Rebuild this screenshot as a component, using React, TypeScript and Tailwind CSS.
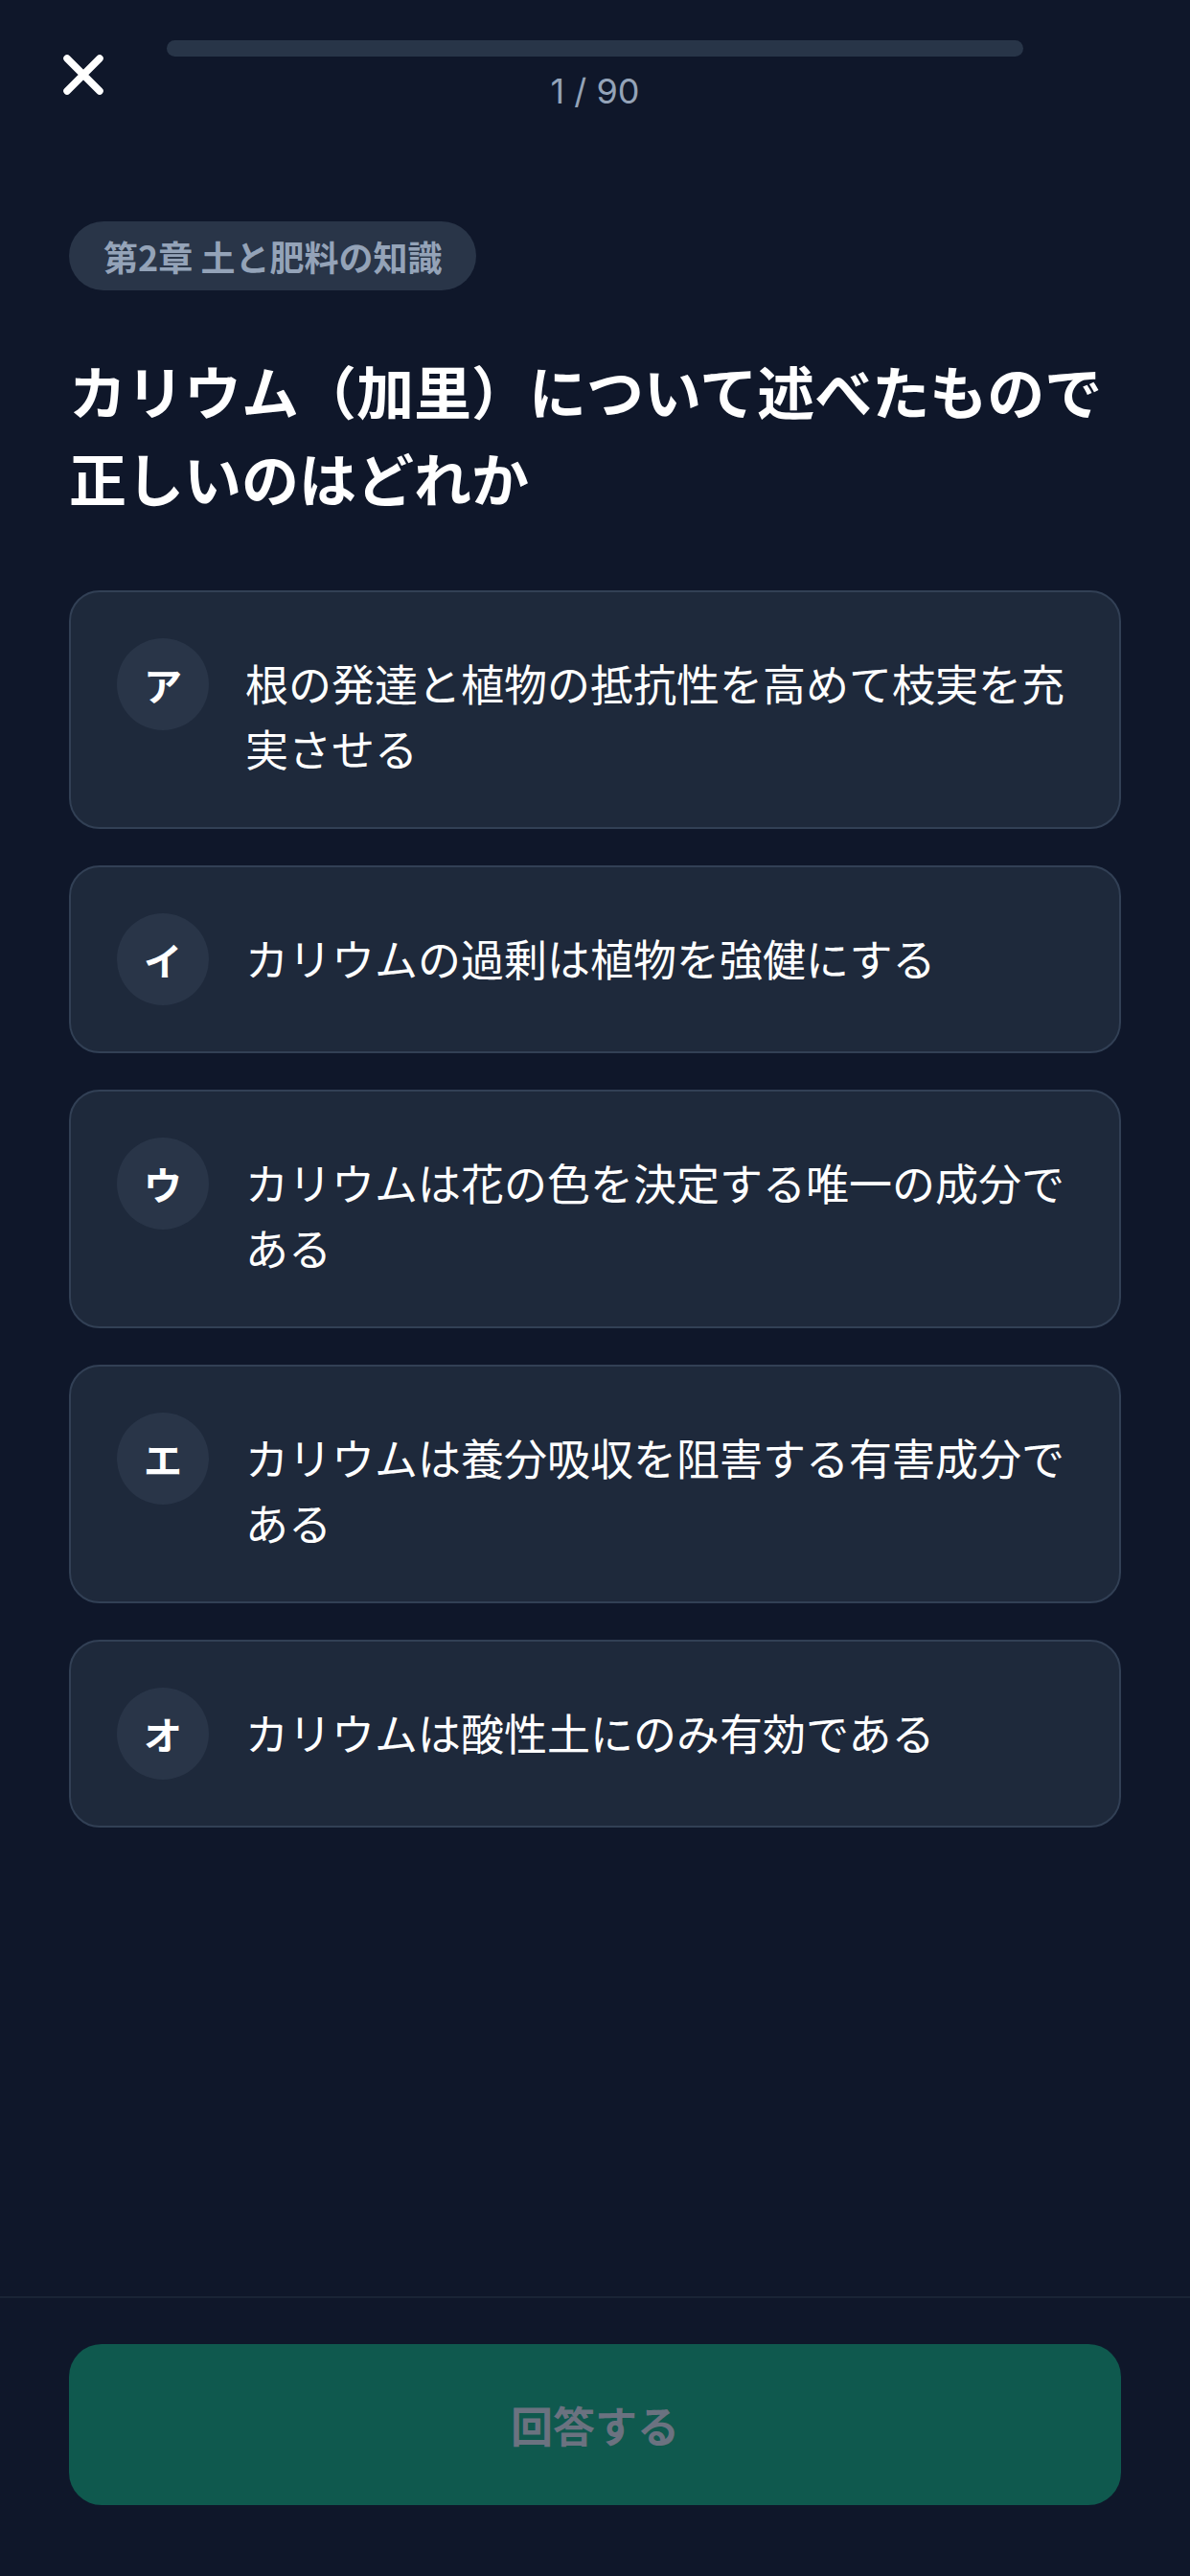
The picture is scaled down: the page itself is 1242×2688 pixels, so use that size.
import React from "react";

interface Choice {
  label: string;
  text: string;
}

const choices: Choice[] = [
  { label: "ア", text: "根の発達と植物の抵抗性を高めて枝実を充実させる" },
  { label: "イ", text: "カリウムの過剰は植物を強健にする" },
  { label: "ウ", text: "カリウムは花の色を決定する唯一の成分である" },
  { label: "エ", text: "カリウムは養分吸収を阻害する有害成分である" },
  { label: "オ", text: "カリウムは酸性土にのみ有効である" },
];

const jpFont = "font-['Noto_Sans_CJK_JP','Noto_Sans',sans-serif]";

const ChoiceCard: React.FC<{ choice: Choice }> = ({ choice }) => (
  <button
    type="button"
    className="flex w-full items-start gap-[38px] rounded-[32px] border-2 border-[#324055] bg-[#1e293b] p-[48px] text-left"
  >
    <span className="flex h-[96px] w-[96px] shrink-0 items-center justify-center rounded-full bg-[#293548] text-[40px] font-bold text-white">
      {choice.label}
    </span>
    <span className="flex-1 pt-[13px] text-[45px] leading-[68px] text-white">
      {choice.text}
    </span>
  </button>
);

export default function App() {
  return (
    <div className={`flex min-h-screen flex-col bg-[#0f172a] ${jpFont}`}>
      {/* Header */}
      <div className="flex items-start px-[58px] pt-[42px]">
        <button type="button" className="mt-[7px] flex h-[58px] w-[58px] items-center justify-center">
          <svg width="44" height="44" viewBox="0 0 44 44" fill="none">
            <path d="M5 5L39 39M39 5L5 39" stroke="#ffffff" strokeWidth="7.5" strokeLinecap="round" />
          </svg>
        </button>
        <div className="mx-[58px] flex flex-1 flex-col items-center">
          <div className="h-[17px] w-full rounded-full bg-[#283548]" />
          <div className="mt-[14px] font-['Inter',sans-serif] text-[36px] leading-[44px] text-[#94a3b8]">1 / 90</div>
        </div>
        <div className="w-[58px]" />
      </div>

      {/* Question */}
      <div className="px-[72px] pt-[114px]">
        <span className="inline-flex h-[72px] items-center rounded-full bg-[#293548] px-[36px] text-[36px] font-bold text-[#94a3b8]">
          第2章 土と肥料の知識
        </span>
        <h1 className="mt-[58px] text-[60px] font-bold leading-[91px] text-white">
          カリウム（加里）について述べたもので正しいのはどれか
        </h1>
        <div className="mt-[73px] flex flex-col gap-[38px]">
          {choices.map((c) => (
            <ChoiceCard key={c.label} choice={c} />
          ))}
        </div>
      </div>

      <div className="flex-1" />

      {/* Footer */}
      <div className="border-t-2 border-[#1a2436] px-[72px] pb-[74px] pt-[48px]">
        <button
          type="button"
          className="flex h-[168px] w-full items-center justify-center rounded-[34px] bg-[#0f594e] text-[44px] font-bold text-[#6b7280]"
        >
          回答する
        </button>
      </div>
    </div>
  );
}
